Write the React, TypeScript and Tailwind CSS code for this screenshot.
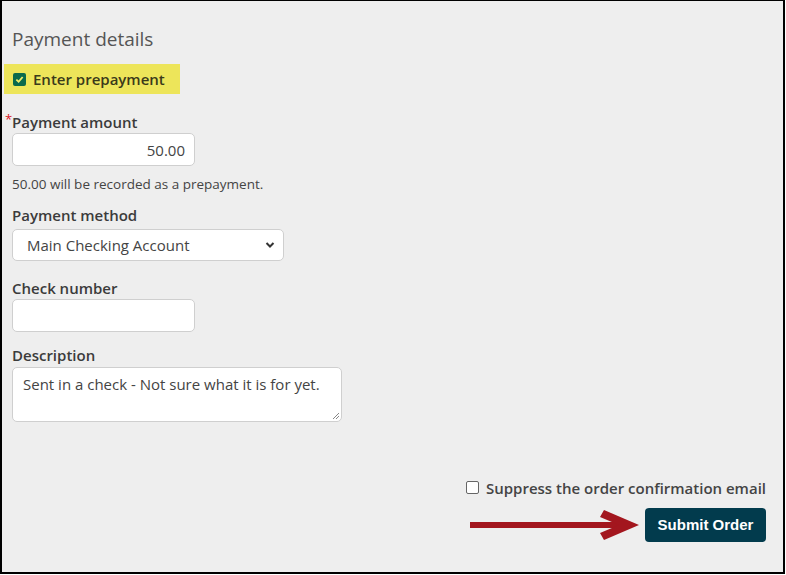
export default function App() {
  return (
    <div className="w-[786px] h-[575px] bg-white">
      <div
        className="w-[785px] h-[574px] bg-[#eeeeee] border-l-2 border-t border-r-2 border-b-2 border-black flex flex-col text-[#333]"
        style={{ fontFamily: '"Open Sans", sans-serif' }}
      >
        <div className="pl-[10px] pr-[17px] pt-[25px] flex flex-col flex-1">
          <h2 className="text-[19px] leading-[26px] text-[#555] font-normal">Payment details</h2>

          <div className="mt-[12px] ml-[-8px] w-[176px] h-[30px] bg-[#ede55a] flex items-center pl-[9px] gap-[7px]">
            <span className="w-[13px] h-[13px] rounded-[2px] bg-[#0b6a4c] flex items-center justify-center">
              <svg width="9" height="9" viewBox="0 0 10 10">
                <path d="M1.5 5.2 L4 7.5 L8.5 2.2" fill="none" stroke="#f2ee6a" strokeWidth="2" />
              </svg>
            </span>
            <span className="text-[15px] font-semibold text-[#3a3a1a]">Enter prepayment</span>
          </div>

          <div className="mt-[18px] relative">
            <span className="absolute left-[-7px] top-[1px] text-[#d9151d] text-[13px] leading-none">*</span>
            <label className="block text-[15px] leading-[20px] font-semibold text-[#3b3b3b]">Payment amount</label>
          </div>
          <input
            readOnly
            value="50.00"
            className="mt-[1px] w-[183px] h-[33px] bg-white border border-[#cfcfcf] rounded-[5px] text-right pr-[9px] text-[15px] text-[#444] outline-none"
          />
          <p className="mt-[9px] text-[13.5px] leading-[18px] text-[#444]">50.00 will be recorded as a prepayment.</p>

          <label className="mt-[12px] block text-[15px] leading-[20px] font-semibold text-[#3b3b3b]">Payment method</label>
          <div className="mt-[4px] w-[272px] h-[32px] bg-white border border-[#cfcfcf] rounded-[5px] flex items-center justify-between pl-[14px] pr-[8px]">
            <span className="text-[15px] text-[#444]">Main Checking Account</span>
            <svg width="10" height="8" viewBox="0 0 10 8">
              <path d="M1.5 2 L5 5.5 L8.5 2" fill="none" stroke="#333" strokeWidth="2" />
            </svg>
          </div>

          <label className="mt-[17px] block text-[15px] leading-[20px] font-semibold text-[#3b3b3b]">Check number</label>
          <div className="mt-[1px] w-[183px] h-[33px] bg-white border border-[#cfcfcf] rounded-[5px]" />

          <label className="mt-[13px] block text-[15px] leading-[20px] font-semibold text-[#3b3b3b]">Description</label>
          <div className="mt-[2px] w-[330px] h-[55px] bg-white border border-[#cfcfcf] rounded-[5px] relative pl-[10px] pt-[4px]">
            <span className="text-[15px] text-[#444]">Sent in a check - Not sure what it is for yet.</span>
            <svg className="absolute right-[1px] bottom-[1px]" width="8" height="8" viewBox="0 0 8 8">
              <path d="M7 1 L1 7 M7 4 L4 7" stroke="#888" strokeWidth="1" />
            </svg>
          </div>

          <div className="mt-auto mb-[30px] flex flex-col items-end">
            <div className="flex items-center gap-[7px]">
              <span className="w-[13px] h-[13px] rounded-[2px] border border-[#666] bg-white" />
              <span className="text-[15px] font-semibold text-[#444]">Suppress the order confirmation email</span>
            </div>
            <div className="mt-[9px] flex items-center gap-[5px]">
              <svg width="170" height="34" viewBox="0 0 170 34">
                <rect x="0" y="14" width="150" height="6" fill="#a3161e" />
                <path d="M134 2 L169 17 L134 32 L130 25 L149 17 L130 9 Z" fill="#a3161e" />
              </svg>
              <button
                className="w-[121px] h-[34px] bg-[#023b4d] rounded-[4px] text-white text-[15px] font-bold"
                style={{ fontFamily: '"Liberation Sans", Arial, sans-serif' }}
              >
                Submit Order
              </button>
            </div>
          </div>
        </div>
      </div>
    </div>
  );
}
